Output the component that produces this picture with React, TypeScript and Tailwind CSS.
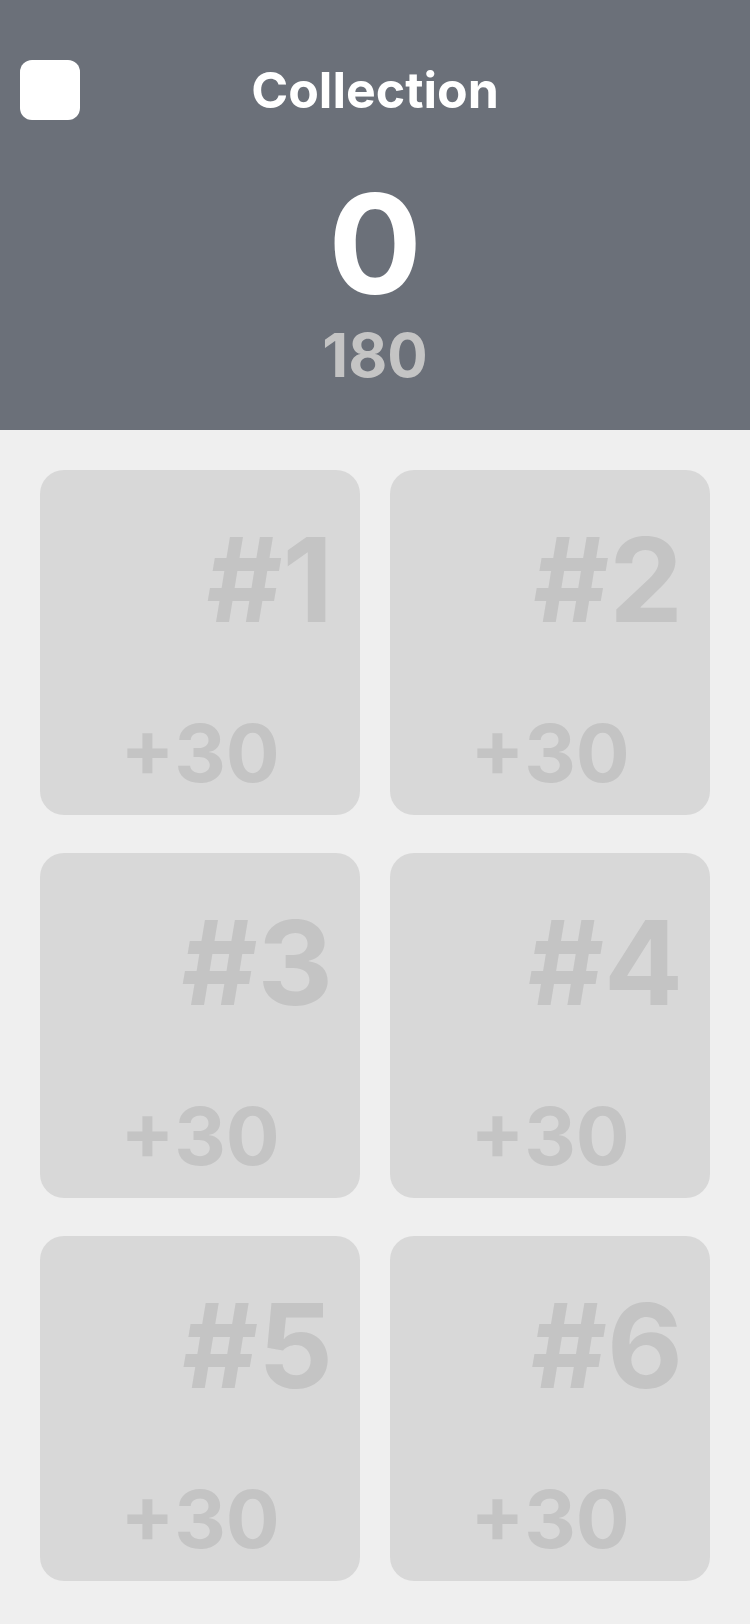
const cards = [1, 2, 3, 4, 5, 6];

export default function App() {
  return (
    <div
      className="min-h-[1624px] w-[750px] bg-[#efefef]"
      style={{ fontFamily: "Inter, 'Liberation Sans', sans-serif" }}
    >
      <header className="flex h-[430px] flex-col items-center bg-[#6b7079] pt-[60px]">
        <div className="grid h-[60px] w-full grid-cols-[60px_1fr_60px] items-center px-[20px]">
          <button className="h-[60px] w-[60px] rounded-[12px] bg-white" aria-label="menu" />
          <h1 className="text-center text-[50px] font-bold leading-none text-white">Collection</h1>
          <div />
        </div>
        <p className="mt-[54px] text-[139px] font-bold leading-none text-white">0</p>
        <p className="mt-[12px] text-[60px] font-bold leading-none text-[#c4c4c4]">180</p>
      </header>

      <main className="grid grid-cols-2 gap-x-[30px] gap-y-[38px] px-[40px] pt-[40px] pb-[42px]">
        {cards.map((n) => (
          <div
            key={n}
            className="flex h-[345px] flex-col justify-between rounded-[24px] bg-[#d8d8d8] pt-[51px] pb-[22px] pr-[27px]"
          >
            <p className="text-right text-[117px] font-bold leading-none text-[#c4c4c4]">#{n}</p>
            <p className="pl-[27px] text-center text-[80px] font-bold leading-none text-[#c4c4c4]">+30</p>
          </div>
        ))}
      </main>
    </div>
  );
}
